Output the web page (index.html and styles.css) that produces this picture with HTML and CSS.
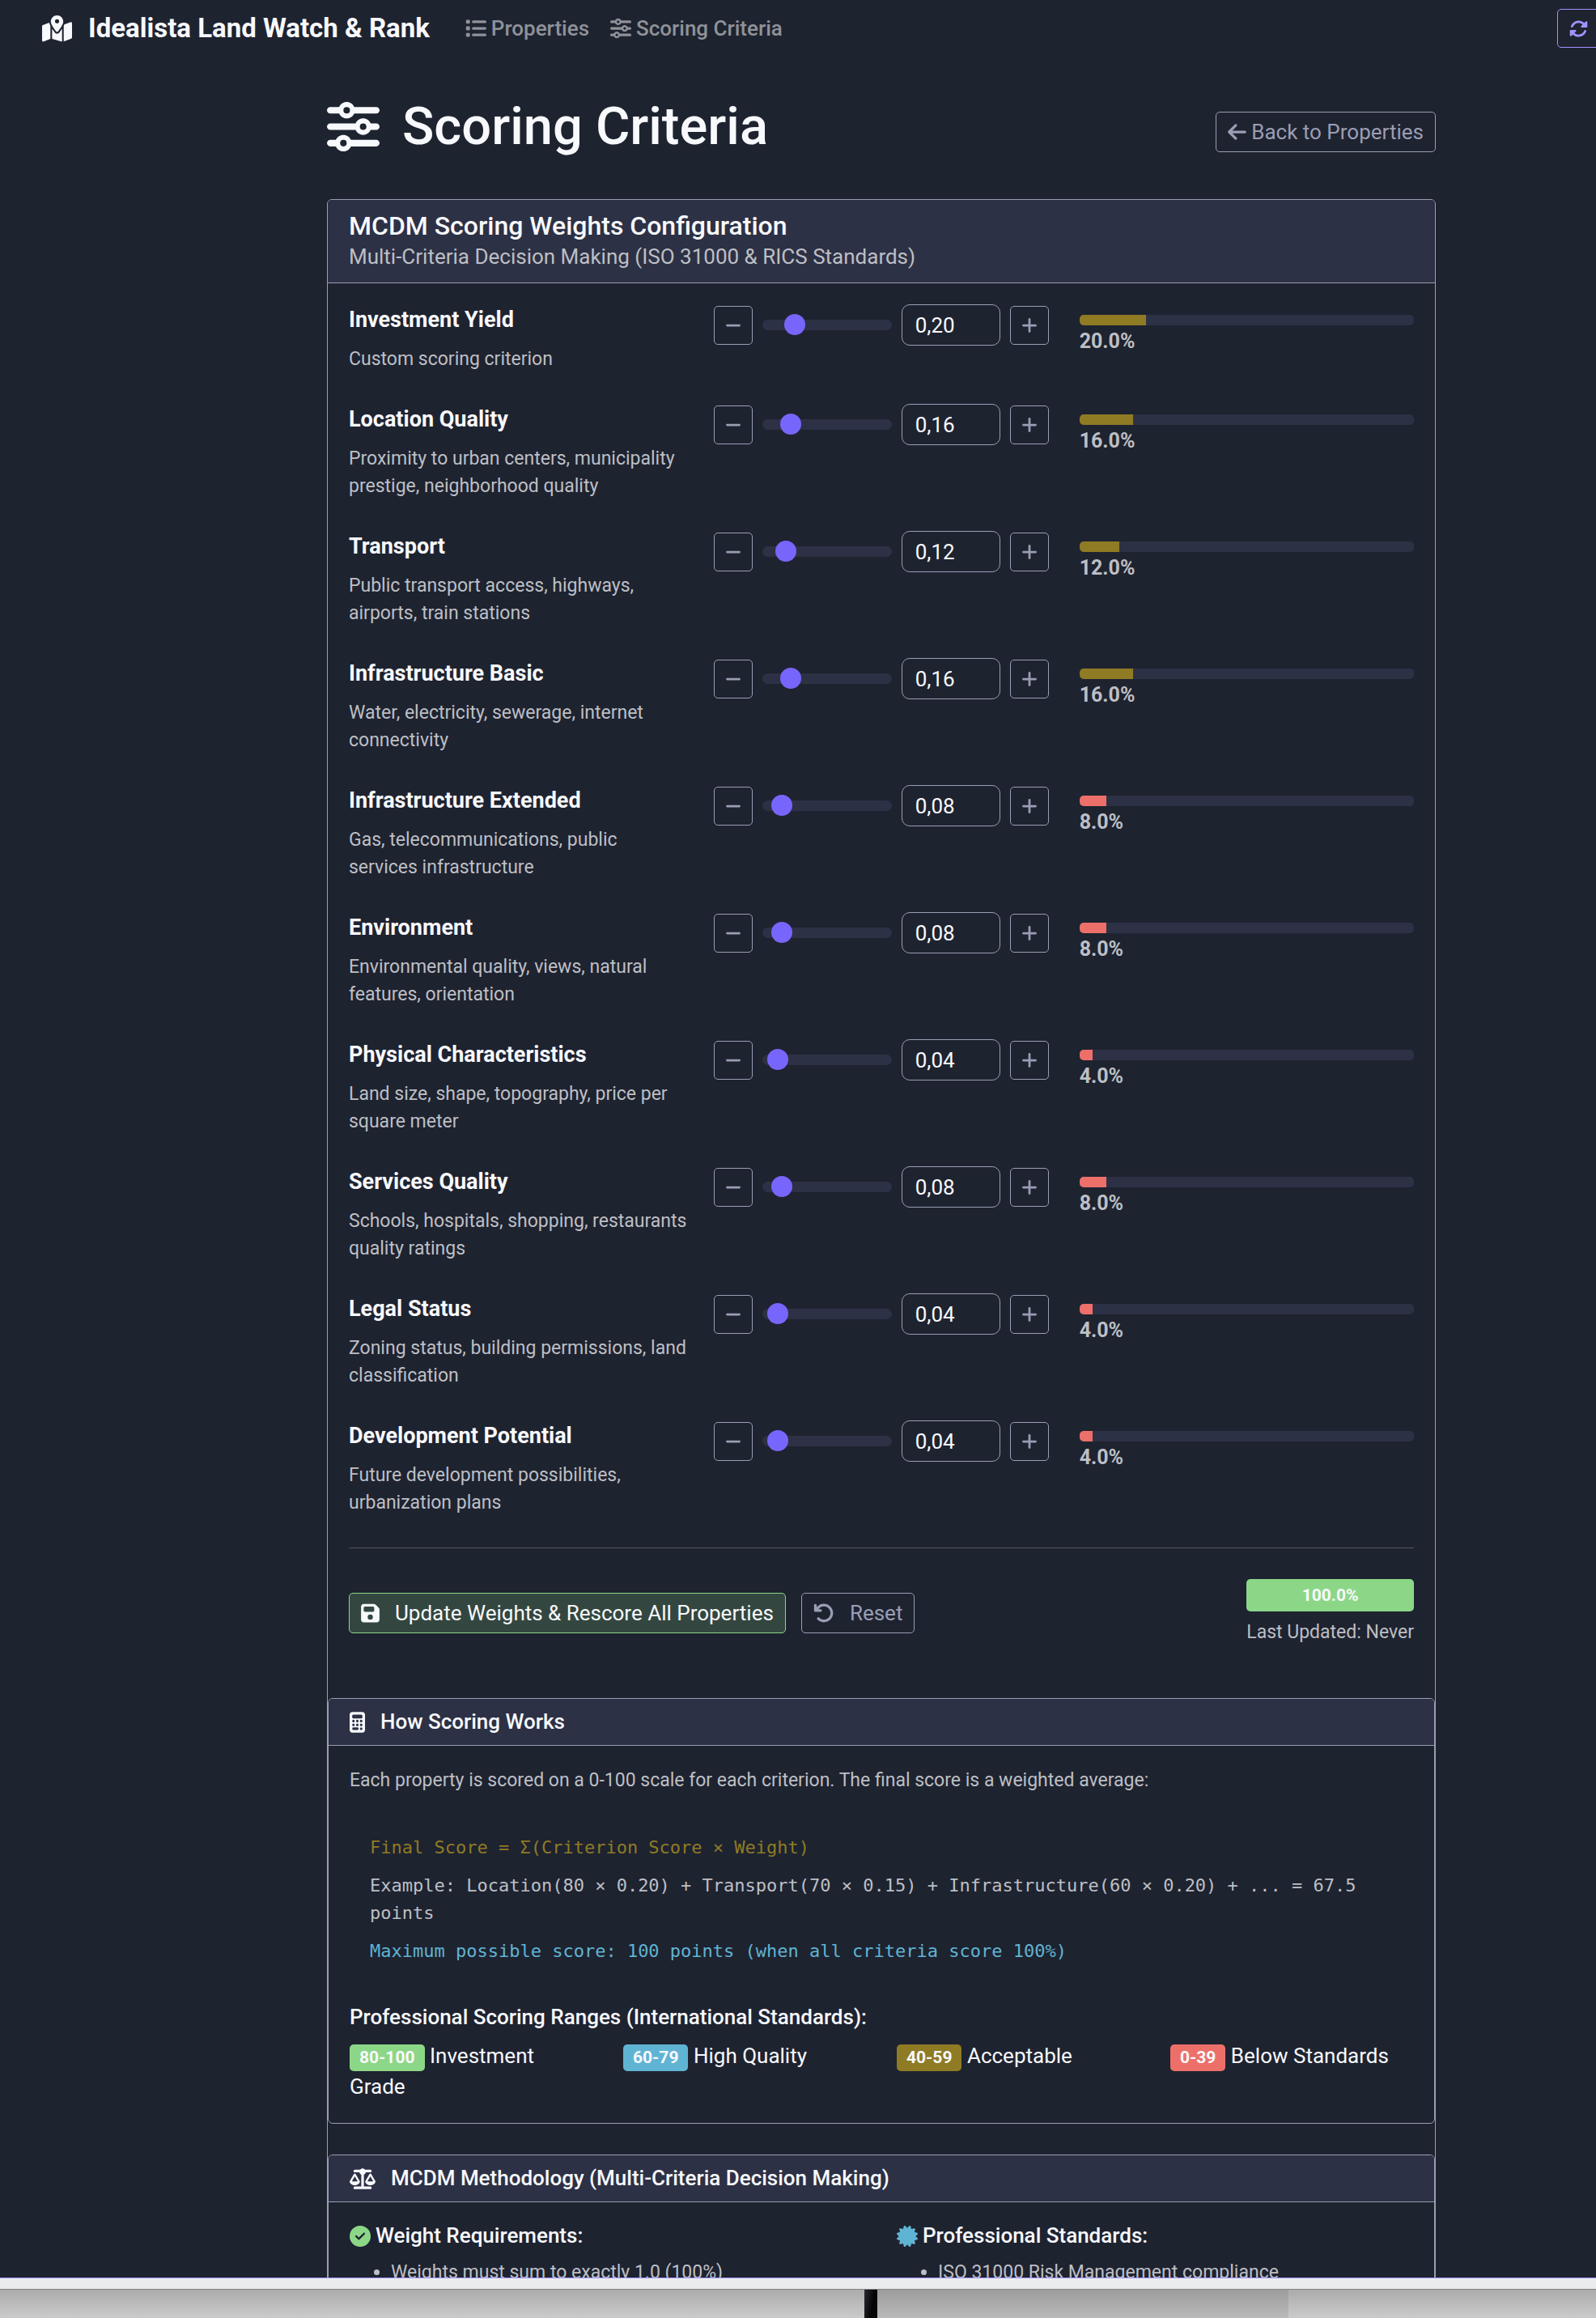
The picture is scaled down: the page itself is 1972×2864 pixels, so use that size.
FILE: index.html
```html
<!DOCTYPE html>
<html lang="en">
<head>
<meta charset="utf-8">
<title>Scoring Criteria</title>
<link rel="stylesheet" href="styles.css">
</head>
<body>
<svg class="sprite" aria-hidden="true">
  <symbol id="i-sliders" viewBox="0 0 512 512"><path d="M0 416c0 17.7 14.3 32 32 32l54.7 0c12.3 28.3 40.5 48 73.3 48s61-19.7 73.3-48L480 448c17.7 0 32-14.3 32-32s-14.3-32-32-32l-246.7 0c-12.3-28.3-40.5-48-73.3-48s-61 19.7-73.3 48L32 384c-17.7 0-32 14.3-32 32zm128 0a32 32 0 1 1 64 0 32 32 0 1 1 -64 0zM320 256a32 32 0 1 1 64 0 32 32 0 1 1 -64 0zm32-80c-32.8 0-61 19.7-73.3 48L32 224c-17.7 0-32 14.3-32 32s14.3 32 32 32l246.7 0c12.3 28.3 40.5 48 73.3 48s61-19.7 73.3-48l54.7 0c17.7 0 32-14.3 32-32s-14.3-32-32-32l-54.7 0c-12.3-28.3-40.5-48-73.3-48zM192 128a32 32 0 1 1 0-64 32 32 0 1 1 0 64zm73.3-64C253 35.7 224.8 16 192 16s-61 19.7-73.3 48L32 64C14.3 64 0 78.3 0 96s14.3 32 32 32l86.7 0c12.3 28.3 40.5 48 73.3 48s61-19.7 73.3-48L480 128c17.7 0 32-14.3 32-32s-14.3-32-32-32L265.3 64z"/></symbol>
  <symbol id="i-map" viewBox="0 0 576 512"><path d="M408 120c0 54.6-73.1 151.9-105.2 192c-7.7 9.6-22 9.6-29.6 0C241.1 271.9 168 174.6 168 120C168 53.7 221.7 0 288 0s120 53.7 120 120zm8 80.4c3.5-6.9 6.7-13.8 9.6-20.6c.5-1.2 1-2.5 1.5-3.7l116-46.4C558.9 123.4 576 135 576 152V422.8c0 9.8-6 18.6-15.1 22.3L416 503V200.4zM137.6 138.3c2.4 14.1 7.2 28.3 12.8 41.5c2.9 6.8 6.1 13.7 9.6 20.6V451.8L32.9 502.7C17.1 509 0 497.4 0 480.4V209.6c0-9.8 6-18.6 15.1-22.3l122.6-49zM327.8 332c13.9-17.4 35.7-45.7 56.2-77V504.3L192 449.4V255c20.5 31.3 42.3 59.6 56.2 77c20.5 25.6 59.1 25.6 79.6 0zM288 152a40 40 0 1 0 0-80 40 40 0 1 0 0 80z"/></symbol>
  <symbol id="i-list" viewBox="0 0 512 512"><path d="M40 48C26.7 48 16 58.7 16 72v48c0 13.3 10.7 24 24 24H88c13.3 0 24-10.7 24-24V72c0-13.3-10.7-24-24-24H40zM192 64c-17.7 0-32 14.3-32 32s14.3 32 32 32H480c17.7 0 32-14.3 32-32s-14.3-32-32-32H192zm0 160c-17.7 0-32 14.3-32 32s14.3 32 32 32H480c17.7 0 32-14.3 32-32s-14.3-32-32-32H192zm0 160c-17.7 0-32 14.3-32 32s14.3 32 32 32H480c17.7 0 32-14.3 32-32s-14.3-32-32-32H192zM16 232v48c0 13.3 10.7 24 24 24H88c13.3 0 24-10.7 24-24V232c0-13.3-10.7-24-24-24H40c-13.3 0-24 10.7-24 24zM40 368c-13.3 0-24 10.7-24 24v48c0 13.3 10.7 24 24 24H88c13.3 0 24-10.7 24-24V392c0-13.3-10.7-24-24-24H40z"/></symbol>
  <symbol id="i-sync" viewBox="0 0 512 512"><path d="M142.9 142.9c62.2-62.2 162.7-62.5 225.3-1L327 183c-6.9 6.9-8.9 17.2-5.2 26.2s12.5 14.8 22.2 14.8H463.5H472c13.3 0 24-10.7 24-24V72c0-9.7-5.8-18.5-14.8-22.2s-19.3-1.7-26.2 5.2L413.4 96.6c-87.6-86.5-228.7-86.2-315.8 1C73.2 122 55.6 150.7 44.8 181.4c-5.9 16.7 2.9 34.9 19.5 40.8s34.9-2.9 40.8-19.5c7.7-21.8 20.2-42.3 37.8-59.8zM16 312v7.6 .7V440c0 9.7 5.8 18.5 14.8 22.2s19.3 1.7 26.2-5.2l41.6-41.6c87.6 86.5 228.7 86.2 315.8-1c24.4-24.4 42.1-53.1 52.9-83.7c5.9-16.7-2.9-34.9-19.5-40.8s-34.9 2.9-40.8 19.5c-7.7 21.8-20.2 42.3-37.8 59.8c-62.2 62.2-162.7 62.5-225.3 1L185 329c6.9-6.9 8.9-17.2 5.2-26.2s-12.5-14.8-22.2-14.8H48.4h-.7H40c-13.3 0-24 10.7-24 24z"/></symbol>
  <symbol id="i-left" viewBox="0 0 448 512"><path d="M9.4 233.4c-12.5 12.5-12.5 32.8 0 45.3l160 160c12.5 12.5 32.8 12.5 45.3 0s12.5-32.8 0-45.3L109.2 288 416 288c17.7 0 32-14.3 32-32s-14.3-32-32-32l-306.7 0L214.6 118.6c12.5-12.5 12.5-32.8 0-45.3s-32.8-12.5-45.3 0l-160 160z"/></symbol>
  <symbol id="i-save" viewBox="0 0 448 512"><path d="M64 32C28.7 32 0 60.7 0 96V416c0 35.3 28.7 64 64 64H384c35.3 0 64-28.7 64-64V173.3c0-17-6.7-33.3-18.7-45.3L352 50.7C340 38.7 323.7 32 306.7 32H64zm0 96c0-17.7 14.3-32 32-32H288c17.7 0 32 14.3 32 32v64c0 17.7-14.3 32-32 32H96c-17.7 0-32-14.3-32-32V128zM224 288a64 64 0 1 1 0 128 64 64 0 1 1 0-128z"/></symbol>
  <symbol id="i-undo" viewBox="0 0 512 512"><path d="M125.7 160H176c17.7 0 32 14.3 32 32s-14.3 32-32 32H48c-17.7 0-32-14.3-32-32V64c0-17.7 14.3-32 32-32s32 14.3 32 32v51.2L97.6 97.6c87.5-87.5 229.3-87.5 316.8 0s87.5 229.3 0 316.8s-229.3 87.5-316.8 0c-12.5-12.5-12.5-32.8 0-45.3s32.8-12.5 45.3 0c62.5 62.5 163.8 62.5 226.3 0s62.5-163.8 0-226.3s-163.8-62.5-226.3 0L125.7 160z"/></symbol>
  <symbol id="i-calc" viewBox="0 0 384 512"><path d="M64 0C28.7 0 0 28.7 0 64V448c0 35.3 28.7 64 64 64H320c35.3 0 64-28.7 64-64V64c0-35.3-28.7-64-64-64H64zM96 64H288c17.7 0 32 14.3 32 32v32c0 17.7-14.3 32-32 32H96c-17.7 0-32-14.3-32-32V96c0-17.7 14.3-32 32-32zm32 160a32 32 0 1 1 -64 0 32 32 0 1 1 64 0zM96 352a32 32 0 1 1 0-64 32 32 0 1 1 0 64zM64 416c0-17.7 14.3-32 32-32h96c17.7 0 32 14.3 32 32s-14.3 32-32 32H96c-17.7 0-32-14.3-32-32zM192 256a32 32 0 1 1 0-64 32 32 0 1 1 0 64zm32 64a32 32 0 1 1 -64 0 32 32 0 1 1 64 0zm64-64a32 32 0 1 1 0-64 32 32 0 1 1 0 64zm32 64a32 32 0 1 1 -64 0 32 32 0 1 1 64 0zM288 448a32 32 0 1 1 0-64 32 32 0 1 1 0 64z"/></symbol>
  <symbol id="i-scale" viewBox="0 0 640 512"><path d="M384 32H512c17.7 0 32 14.3 32 32s-14.3 32-32 32H398.4c-5.2 25.8-22.9 47.1-46.4 57.3V448H512c17.7 0 32 14.3 32 32s-14.3 32-32 32H320 128c-17.7 0-32-14.3-32-32s14.3-32 32-32H288V153.3c-23.5-10.3-41.2-31.6-46.4-57.3H128c-17.7 0-32-14.3-32-32s14.3-32 32-32H256c14.6-19.4 37.8-32 64-32s49.4 12.6 64 32zm55.6 288H584.4L512 195.8 439.6 320zM512 416c-62.9 0-115.2-34-126-78.9c-2.6-11 1-22.3 6.7-32.1l95.2-163.2c5-8.6 14.2-13.8 24.1-13.8s19.1 5.3 24.1 13.8l95.2 163.2c5.7 9.8 9.3 21.1 6.7 32.1C627.2 382 574.9 416 512 416zM126.8 195.8L54.4 320H199.3L126.8 195.8zM.9 337.1c-2.6-11 1-22.3 6.7-32.1l95.2-163.2c5-8.6 14.2-13.8 24.1-13.8s19.1 5.3 24.1 13.8l95.2 163.2c5.7 9.8 9.3 21.1 6.7 32.1C242 382 189.7 416 126.8 416S11.7 382 .9 337.1z"/></symbol>
  <symbol id="i-check" viewBox="0 0 512 512"><path d="M256 512A256 256 0 1 0 256 0a256 256 0 1 0 0 512zM369 209L241 337c-9.4 9.4-24.6 9.4-33.9 0l-64-64c-9.4-9.4-9.4-24.6 0-33.9s24.6-9.4 33.9 0l47 47L335 175c9.4-9.4 24.6-9.4 33.9 0s9.4 24.6 0 33.9z"/></symbol>
  <symbol id="i-cert" viewBox="0 0 512 512"><path d="M211 7.3C205 1 196-1.4 187.6 .8s-14.9 8.9-17.1 17.3L154.7 80.6l-62-17.5c-8.4-2.4-17.4 0-23.5 6.1s-8.5 15.1-6.1 23.5l17.5 62L18.1 170.6c-8.4 2.1-15 8.7-17.3 17.1S1 205 7.3 211l46.2 45L7.3 301C1 307-1.4 316 .8 324.4s8.9 14.9 17.3 17.1l62.5 15.8-17.5 62c-2.4 8.4 0 17.4 6.1 23.5s15.1 8.5 23.5 6.1l62-17.5 15.8 62.5c2.1 8.4 8.7 15 17.1 17.3s17.3-.2 23.4-6.4l45-46.2 45 46.2c6.1 6.2 15 8.7 23.4 6.4s14.9-8.9 17.1-17.3l15.8-62.5 62 17.5c8.4 2.4 17.4 0 23.5-6.1s8.5-15.1 6.1-23.5l-17.5-62 62.5-15.8c8.4-2.1 15-8.7 17.3-17.1s-.2-17.3-6.4-23.4l-46.2-45 46.2-45c6.2-6.1 8.7-15 6.4-23.4s-8.9-14.9-17.3-17.1l-62.5-15.8 17.5-62c2.4-8.4 0-17.4-6.1-23.5s-15.1-8.5-23.5-6.1l-62 17.5L341.4 18.1c-2.1-8.4-8.7-15-17.1-17.3S307 1 301 7.3L256 53.5 211 7.3z"/></symbol>
  <symbol id="i-minus" viewBox="0 0 448 512"><path d="M432 256c0 17.7-14.3 32-32 32L48 288c-17.7 0-32-14.3-32-32s14.3-32 32-32l352 0c17.7 0 32 14.3 32 32z"/></symbol>
  <symbol id="i-plus" viewBox="0 0 448 512"><path d="M256 80c0-17.7-14.3-32-32-32s-32 14.3-32 32l0 144L48 224c-17.7 0-32 14.3-32 32s14.3 32 32 32l144 0 0 144c0 17.7 14.3 32 32 32s32-14.3 32-32l0-144 144 0c17.7 0 32-14.3 32-32s-14.3-32-32-32l-144 0 0-144z"/></symbol>
</svg>

<div class="window">
  <nav class="navbar">
    <a class="brand" href="#"><svg class="icon icon-brand"><use href="#i-map"/></svg>Idealista Land Watch &amp; Rank</a>
    <a class="nav-link" href="#"><svg class="icon icon-md"><use href="#i-list"/></svg>Properties</a>
    <a class="nav-link" href="#"><svg class="icon icon-md"><use href="#i-sliders"/></svg>Scoring Criteria</a>
    <button class="btn btn-refresh" type="button" aria-label="Refresh"><svg class="icon icon-sm"><use href="#i-sync"/></svg></button>
  </nav>

  <main class="container">
    <header class="page-header">
      <h1><svg class="icon icon-xl"><use href="#i-sliders"/></svg>Scoring Criteria</h1>
      <a class="btn btn-back" href="#"><svg class="icon icon-btn"><use href="#i-left"/></svg>Back to Properties</a>
    </header>

    <section class="card">
      <div class="card-header">
        <h2>MCDM Scoring Weights Configuration</h2>
        <p>Multi-Criteria Decision Making (ISO 31000 &amp; RICS Standards)</p>
      </div>
      <form class="card-body">
        <div class="criterion">
          <div><label for="w1">Investment Yield</label><p>Custom scoring criterion</p></div>
          <div class="controls">
            <button class="step" type="button" aria-label="Decrease"><svg class="icon icon-step"><use href="#i-minus"/></svg></button>
            <input class="slider" type="range" min="0" max="1" step="0.01" value="0.20" aria-label="Investment Yield">
            <input class="number" id="w1" type="text" inputmode="decimal" value="0,20">
            <button class="step" type="button" aria-label="Increase"><svg class="icon icon-step"><use href="#i-plus"/></svg></button>
          </div>
          <div class="share"><div class="bar"><div class="fill mid" style="width:20%"></div></div><span>20.0%</span></div>
        </div>
        <div class="criterion">
          <div><label for="w2">Location Quality</label><p>Proximity to urban centers, municipality prestige, neighborhood quality</p></div>
          <div class="controls">
            <button class="step" type="button" aria-label="Decrease"><svg class="icon icon-step"><use href="#i-minus"/></svg></button>
            <input class="slider" type="range" min="0" max="1" step="0.01" value="0.16" aria-label="Location Quality">
            <input class="number" id="w2" type="text" inputmode="decimal" value="0,16">
            <button class="step" type="button" aria-label="Increase"><svg class="icon icon-step"><use href="#i-plus"/></svg></button>
          </div>
          <div class="share"><div class="bar"><div class="fill mid" style="width:16%"></div></div><span>16.0%</span></div>
        </div>
        <div class="criterion">
          <div><label for="w3">Transport</label><p>Public transport access, highways, airports, train stations</p></div>
          <div class="controls">
            <button class="step" type="button" aria-label="Decrease"><svg class="icon icon-step"><use href="#i-minus"/></svg></button>
            <input class="slider" type="range" min="0" max="1" step="0.01" value="0.12" aria-label="Transport">
            <input class="number" id="w3" type="text" inputmode="decimal" value="0,12">
            <button class="step" type="button" aria-label="Increase"><svg class="icon icon-step"><use href="#i-plus"/></svg></button>
          </div>
          <div class="share"><div class="bar"><div class="fill mid" style="width:12%"></div></div><span>12.0%</span></div>
        </div>
        <div class="criterion">
          <div><label for="w4">Infrastructure Basic</label><p>Water, electricity, sewerage, internet connectivity</p></div>
          <div class="controls">
            <button class="step" type="button" aria-label="Decrease"><svg class="icon icon-step"><use href="#i-minus"/></svg></button>
            <input class="slider" type="range" min="0" max="1" step="0.01" value="0.16" aria-label="Infrastructure Basic">
            <input class="number" id="w4" type="text" inputmode="decimal" value="0,16">
            <button class="step" type="button" aria-label="Increase"><svg class="icon icon-step"><use href="#i-plus"/></svg></button>
          </div>
          <div class="share"><div class="bar"><div class="fill mid" style="width:16%"></div></div><span>16.0%</span></div>
        </div>
        <div class="criterion">
          <div><label for="w5">Infrastructure Extended</label><p>Gas, telecommunications, public services infrastructure</p></div>
          <div class="controls">
            <button class="step" type="button" aria-label="Decrease"><svg class="icon icon-step"><use href="#i-minus"/></svg></button>
            <input class="slider" type="range" min="0" max="1" step="0.01" value="0.08" aria-label="Infrastructure Extended">
            <input class="number" id="w5" type="text" inputmode="decimal" value="0,08">
            <button class="step" type="button" aria-label="Increase"><svg class="icon icon-step"><use href="#i-plus"/></svg></button>
          </div>
          <div class="share"><div class="bar"><div class="fill low" style="width:8%"></div></div><span>8.0%</span></div>
        </div>
        <div class="criterion">
          <div><label for="w6">Environment</label><p>Environmental quality, views, natural features, orientation</p></div>
          <div class="controls">
            <button class="step" type="button" aria-label="Decrease"><svg class="icon icon-step"><use href="#i-minus"/></svg></button>
            <input class="slider" type="range" min="0" max="1" step="0.01" value="0.08" aria-label="Environment">
            <input class="number" id="w6" type="text" inputmode="decimal" value="0,08">
            <button class="step" type="button" aria-label="Increase"><svg class="icon icon-step"><use href="#i-plus"/></svg></button>
          </div>
          <div class="share"><div class="bar"><div class="fill low" style="width:8%"></div></div><span>8.0%</span></div>
        </div>
        <div class="criterion">
          <div><label for="w7">Physical Characteristics</label><p>Land size, shape, topography, price per square meter</p></div>
          <div class="controls">
            <button class="step" type="button" aria-label="Decrease"><svg class="icon icon-step"><use href="#i-minus"/></svg></button>
            <input class="slider" type="range" min="0" max="1" step="0.01" value="0.04" aria-label="Physical Characteristics">
            <input class="number" id="w7" type="text" inputmode="decimal" value="0,04">
            <button class="step" type="button" aria-label="Increase"><svg class="icon icon-step"><use href="#i-plus"/></svg></button>
          </div>
          <div class="share"><div class="bar"><div class="fill low" style="width:4%"></div></div><span>4.0%</span></div>
        </div>
        <div class="criterion">
          <div><label for="w8">Services Quality</label><p>Schools, hospitals, shopping, restaurants quality ratings</p></div>
          <div class="controls">
            <button class="step" type="button" aria-label="Decrease"><svg class="icon icon-step"><use href="#i-minus"/></svg></button>
            <input class="slider" type="range" min="0" max="1" step="0.01" value="0.08" aria-label="Services Quality">
            <input class="number" id="w8" type="text" inputmode="decimal" value="0,08">
            <button class="step" type="button" aria-label="Increase"><svg class="icon icon-step"><use href="#i-plus"/></svg></button>
          </div>
          <div class="share"><div class="bar"><div class="fill low" style="width:8%"></div></div><span>8.0%</span></div>
        </div>
        <div class="criterion">
          <div><label for="w9">Legal Status</label><p>Zoning status, building permissions, land classification</p></div>
          <div class="controls">
            <button class="step" type="button" aria-label="Decrease"><svg class="icon icon-step"><use href="#i-minus"/></svg></button>
            <input class="slider" type="range" min="0" max="1" step="0.01" value="0.04" aria-label="Legal Status">
            <input class="number" id="w9" type="text" inputmode="decimal" value="0,04">
            <button class="step" type="button" aria-label="Increase"><svg class="icon icon-step"><use href="#i-plus"/></svg></button>
          </div>
          <div class="share"><div class="bar"><div class="fill low" style="width:4%"></div></div><span>4.0%</span></div>
        </div>
        <div class="criterion">
          <div><label for="w10">Development Potential</label><p>Future development possibilities, urbanization plans</p></div>
          <div class="controls">
            <button class="step" type="button" aria-label="Decrease"><svg class="icon icon-step"><use href="#i-minus"/></svg></button>
            <input class="slider" type="range" min="0" max="1" step="0.01" value="0.04" aria-label="Development Potential">
            <input class="number" id="w10" type="text" inputmode="decimal" value="0,04">
            <button class="step" type="button" aria-label="Increase"><svg class="icon icon-step"><use href="#i-plus"/></svg></button>
          </div>
          <div class="share"><div class="bar"><div class="fill low" style="width:4%"></div></div><span>4.0%</span></div>
        </div>

        <div class="actions">
          <button class="btn btn-save" type="submit"><svg class="icon icon-btn"><use href="#i-save"/></svg>Update Weights &amp; Rescore All Properties</button>
          <button class="btn btn-reset" type="reset"><svg class="icon icon-md"><use href="#i-undo"/></svg>Reset</button>
          <div class="total">
            <output>100.0%</output>
            <p>Last Updated: Never</p>
          </div>
        </div>
      </form>

      <section class="card">
        <h3 class="card-header"><svg class="icon icon-calc"><use href="#i-calc"/></svg>How Scoring Works</h3>
        <div class="card-body">
          <p class="muted">Each property is scored on a 0-100 scale for each criterion. The final score is a weighted average:</p>
          <div class="formula">
            <p class="f-mid">Final Score = Σ(Criterion Score × Weight)</p>
            <p>Example: Location(80 × 0.20) + Transport(70 × 0.15) + Infrastructure(60 × 0.20) + ... = 67.5 points</p>
            <p class="f-info">Maximum possible score: 100 points (when all criteria score 100%)</p>
          </div>
          <h4>Professional Scoring Ranges (International Standards):</h4>
          <div class="ranges">
            <div><span class="badge high">80-100</span> Investment Grade</div>
            <div><span class="badge good">60-79</span> High Quality</div>
            <div><span class="badge mid">40-59</span> Acceptable</div>
            <div><span class="badge low">0-39</span> Below Standards</div>
          </div>
        </div>
      </section>

      <section class="card">
        <h3 class="card-header"><svg class="icon icon-scale"><use href="#i-scale"/></svg>MCDM Methodology (Multi-Criteria Decision Making)</h3>
        <div class="card-body methods">
          <div>
            <h4><svg class="icon icon-md c-high"><use href="#i-check"/></svg>Weight Requirements:</h4>
            <ul><li>Weights must sum to exactly 1.0 (100%)</li></ul>
          </div>
          <div>
            <h4><svg class="icon icon-md c-good"><use href="#i-cert"/></svg>Professional Standards:</h4>
            <ul><li>ISO 31000 Risk Management compliance</li></ul>
          </div>
        </div>
      </section>
    </section>
  </main>
</div>
<div class="desktop" aria-hidden="true">
  <div class="pane pane-left"></div>
  <div class="pane pane-gap"></div>
  <div class="pane pane-mid"></div>
  <div class="pane pane-right"></div>
</div>
</body>
</html>
```
FILE: styles.css
```css
:root {
  --bg: #1e2330;
  --raised: #2d3145;
  --line: #9a9eb4;
  --text: #f8f9fd;
  --muted: #bdbfc4;
  --high: #8cd787;
  --good: #60b4d3;
  --mid: #8f7b24;
  --low: #ec7069;
  --accent: #7766fb;
  --accent-line: #a193fd;
}

* { box-sizing: border-box; }

body {
  margin: 0;
  height: 100vh;
  display: flex;
  flex-direction: column;
  background: var(--bg);
  color: var(--text);
  font: 400 26px/38px Roboto, "Liberation Sans", sans-serif;
}

h1, h2, h3, h4, p, ul { margin: 0; font-weight: 500; }
p, ul { font-weight: 400; }
a { color: inherit; text-decoration: none; }
button, input { font: inherit; color: inherit; margin: 0; }

.sprite { display: none; }
.icon { flex: none; fill: currentColor; fill-rule: evenodd; }
.icon-brand { width: 37px; height: 33px; }
.icon-xl { width: 65px; height: 65px; }
.icon-md { width: 26px; height: 26px; }
.icon-sm { width: 23px; height: 23px; }
.icon-btn { width: 23px; height: 26px; }
.icon-step { width: 20px; height: 22px; }
.icon-calc { width: 19px; height: 26px; }
.icon-scale { width: 32px; height: 26px; }

.window {
  flex: 1;
  min-height: 0;
  overflow: hidden;
  border-bottom: 1px solid var(--accent-line);
}

/* Navigation */
.navbar {
  display: flex;
  align-items: center;
  height: 70px;
  padding-left: 52px;
  overflow: hidden;
}
.brand {
  display: flex;
  align-items: center;
  gap: 20px;
  margin-right: 44px;
  font-size: 33px;
  font-weight: 700;
}
.nav-link {
  display: flex;
  align-items: center;
  gap: 6px;
  margin-right: 26px;
  color: #8f9299;
  font-weight: 500;
}

.btn {
  display: flex;
  align-items: center;
  height: 50px;
  padding: 0 14px;
  background: none;
  border: 1px solid var(--line);
  border-radius: 5px;
  color: var(--line);
  white-space: nowrap;
}
.btn-refresh {
  flex: none;
  height: 48px;
  width: 60px;
  margin: 0 -12px 0 auto;
  border-color: var(--accent-line);
  color: var(--accent-line);
}

/* Page */
.container { padding: 48px 198px 0 404px; }
.page-header {
  display: flex;
  align-items: center;
  justify-content: space-between;
  margin-bottom: 38px;
}
h1 {
  display: flex;
  align-items: center;
  gap: 28px;
  margin-bottom: 13px;
  font-size: 65px;
  line-height: 77px;
}
.btn-back { gap: 6px; }

/* Cards */
.card {
  border: 1px solid var(--line);
  border-radius: 6px;
}
.card .card { margin-bottom: 38px; }
.card-header {
  padding: 13px 26px;
  background: var(--raised);
  border-bottom: 1px solid var(--line);
  border-radius: 5px 5px 0 0;
}
.card-header p { color: var(--muted); }
h2 { font-size: 32px; line-height: 38px; }
h3, h4 {
  display: flex;
  align-items: center;
  font-size: 26px;
  line-height: 31px;
}
h3 { gap: 19px; }
h4 { gap: 6px; margin-bottom: 13px; }
.card-body { padding: 26px; }
form.card-body { padding-bottom: 64px; }

/* Criteria */
.criterion {
  display: grid;
  grid-template-columns: repeat(3, minmax(0, 1fr));
  column-gap: 38px;
  margin-bottom: 38px;
}
.criterion label {
  display: block;
  margin-bottom: 13px;
  font-size: 27px;
  font-weight: 700;
}
.criterion p, .muted, .total p, ul {
  color: var(--muted);
  font-size: 23px;
  line-height: 34px;
}
.criterion p { margin-right: -6px; }
.controls {
  display: flex;
  align-items: center;
  align-self: start;
  gap: 12px;
}
.step {
  display: flex;
  align-items: center;
  justify-content: center;
  flex: none;
  width: 48px;
  height: 48px;
  padding: 0;
  background: none;
  border: 1px solid var(--line);
  border-radius: 5px;
  color: var(--line);
}
.number {
  flex: none;
  width: 122px;
  height: 51px;
  padding: 0 16px;
  background: none;
  border: 1px solid var(--line);
  border-radius: 10px;
}
.slider {
  flex: 1;
  min-width: 0;
  height: 26px;
  appearance: none;
  background: none;
}
.slider::-webkit-slider-runnable-track {
  height: 13px;
  background: var(--raised);
  border-radius: 13px;
}
.slider::-webkit-slider-thumb {
  appearance: none;
  width: 26px;
  height: 26px;
  margin-top: -7px;
  background: var(--accent);
  border-radius: 50%;
}
.share { padding-top: 13px; }
.bar {
  height: 13px;
  margin-bottom: 3px;
  overflow: hidden;
  background: var(--raised);
  border-radius: 5px;
}
.fill { height: 100%; }
.share span {
  display: block;
  color: var(--muted);
  font-size: 25px;
  font-weight: 700;
  line-height: 34px;
}
.high { background: var(--high); }
.good { background: var(--good); }
.mid { background: var(--mid); }
.low { background: var(--low); }
.c-high { color: var(--high); }
.c-good { color: var(--good); }

.actions {
  display: flex;
  align-items: center;
  padding-top: 38px;
  border-top: 1px solid #50545f;
}
.btn-save {
  gap: 19px;
  margin-right: 19px;
  background: #334740;
  border-color: var(--high);
  color: var(--text);
}
.btn-reset { gap: 19px; }
.total { margin-left: auto; }
.total output {
  display: block;
  margin-bottom: 9px;
  background: var(--high);
  border-radius: 5px;
  font-size: 21px;
  font-weight: 700;
  line-height: 40px;
  text-align: center;
}

/* Scoring explanation */
.formula {
  margin: 24px 0;
  padding: 25px;
  color: var(--muted);
  font: 22px/34px "DejaVu Sans Mono", monospace;
}
.formula p + p { margin-top: 13px; }
.f-mid { color: var(--mid); }
.f-info { color: var(--good); }
.ranges {
  display: grid;
  grid-template-columns: repeat(4, minmax(0, 1fr));
  column-gap: 38px;
}
.badge {
  display: inline-block;
  padding: 0 12px;
  border-radius: 5px;
  font-size: 21px;
  font-weight: 700;
  line-height: 33px;
}
.methods {
  display: grid;
  grid-template-columns: 1fr 1fr;
  column-gap: 38px;
}
ul { padding-left: 51px; }

/* Strip of desktop below the window */
.desktop {
  display: flex;
  height: 49px;
  border-top: 13px solid #ebecee;
}
.pane { background: linear-gradient(#ababab, #cbcbcb); border-top: 1px solid #858585; }
.pane-left { flex: 1068; }
.pane-gap { flex: 16; background: linear-gradient(100deg, #2a2b35, #050505 60%); }
.pane-mid { flex: 508; background: linear-gradient(#9c9c9c, #bababa); }
.pane-right { flex: 380; }
```
